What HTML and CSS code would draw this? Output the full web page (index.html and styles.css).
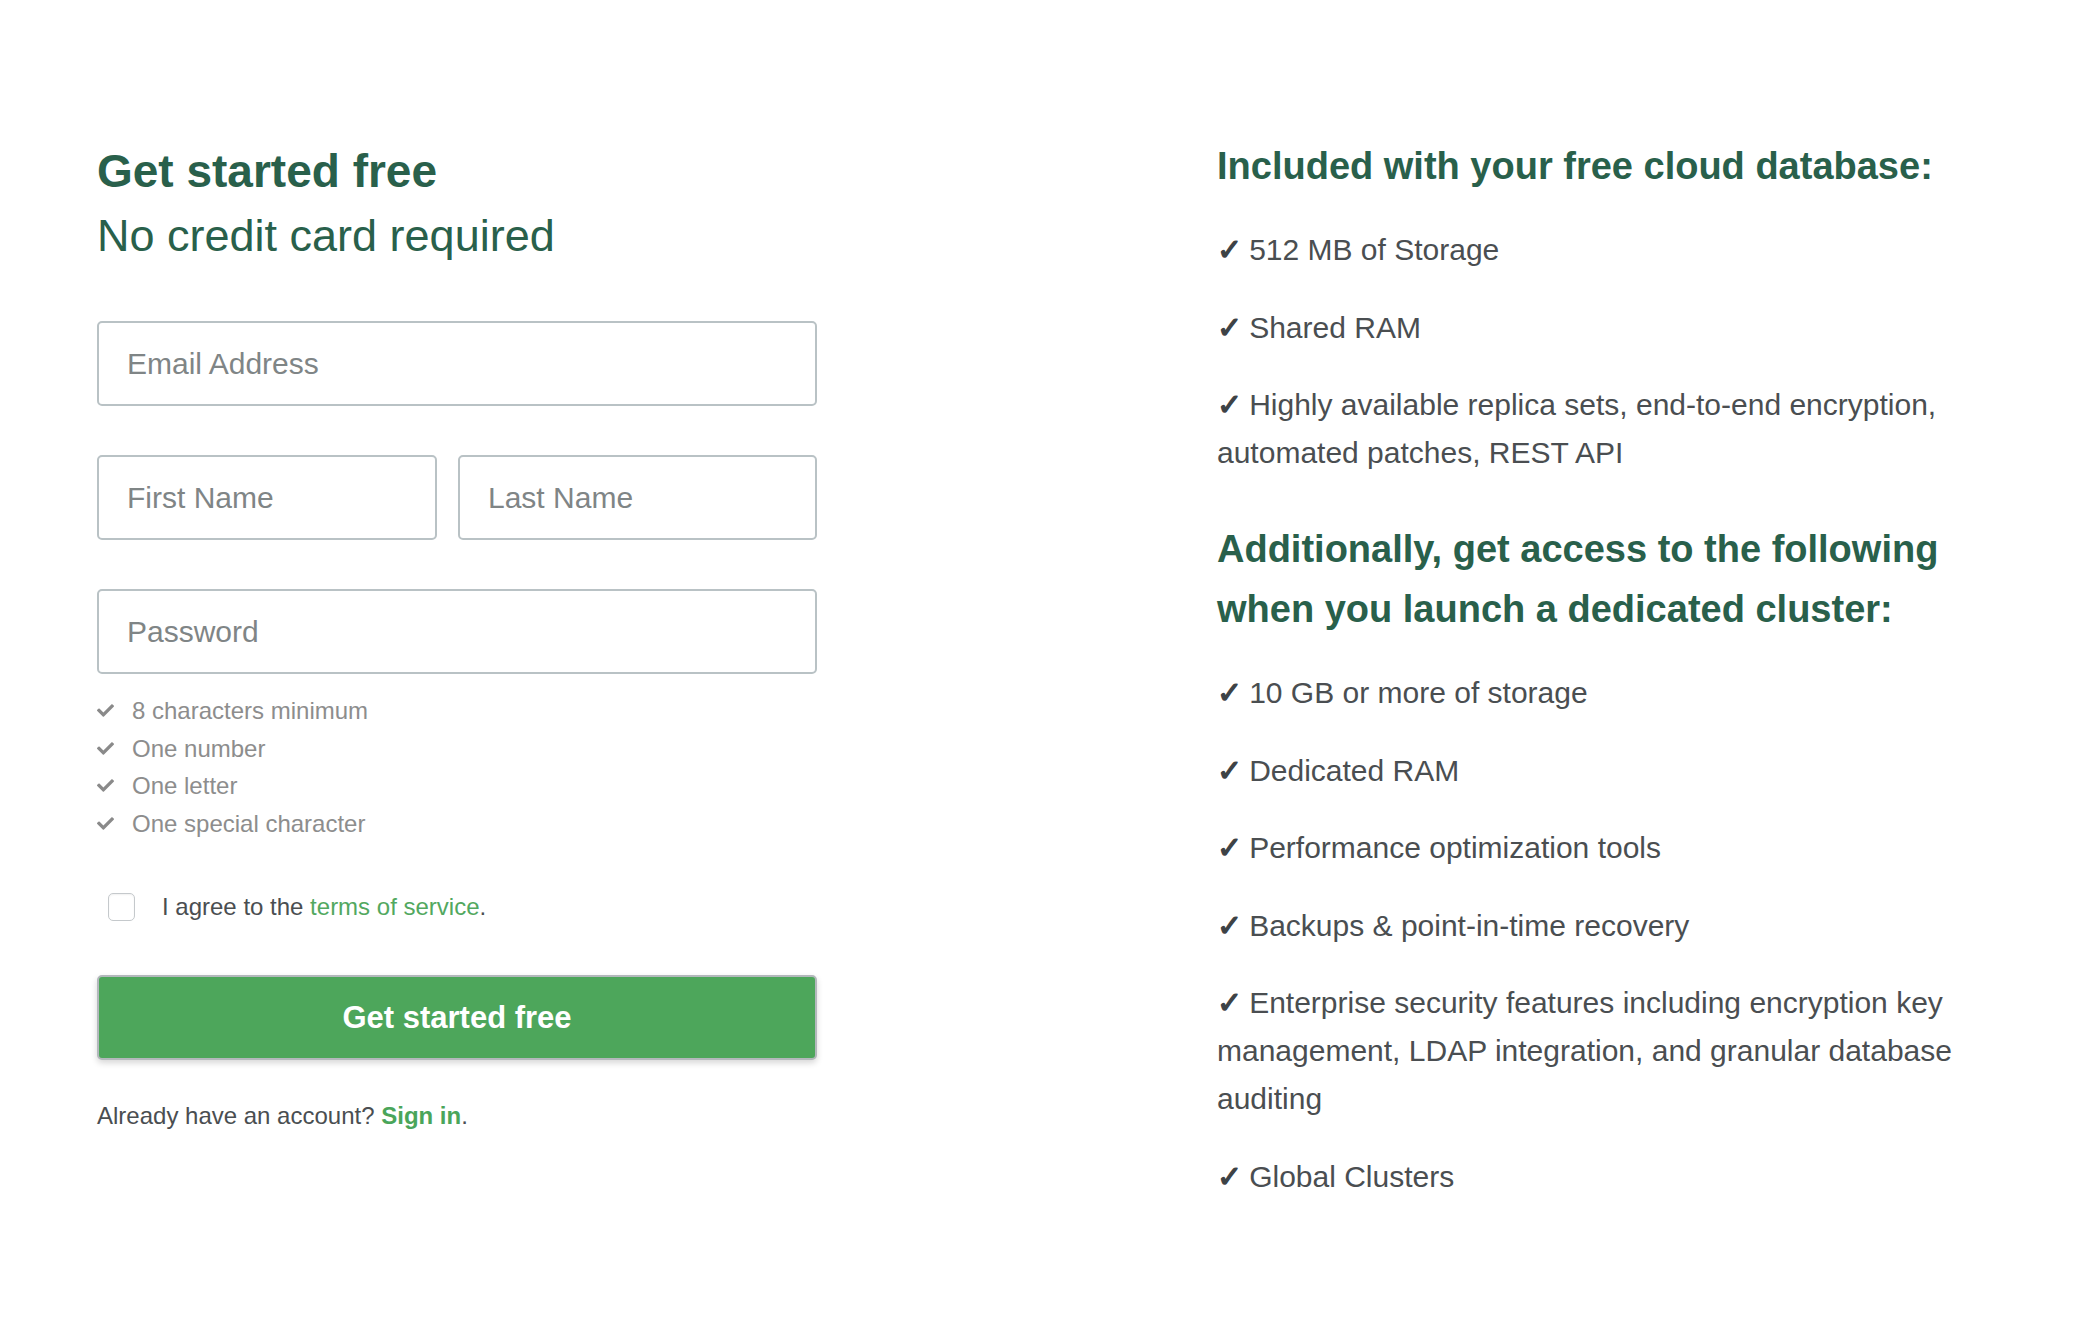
FILE: index.html
```html
<!DOCTYPE html>
<html lang="en">
<head>
<meta charset="utf-8">
<title>Get started free</title>
<link rel="stylesheet" href="styles.css">
</head>
<body>
<main class="page">
  <section class="signup">
    <h1 class="title">Get started free</h1>
    <p class="subtitle">No credit card required</p>
    <form class="form">
      <div class="fields">
        <div class="field"><span class="ph">Email Address</span></div>
        <div class="name-row">
          <div class="field"><span class="ph">First Name</span></div>
          <div class="field"><span class="ph">Last Name</span></div>
        </div>
        <div class="field"><span class="ph">Password</span></div>
      </div>
      <ul class="rules">
        <li><svg class="rule-check" viewBox="0 60 512 392" aria-hidden="true"><path d="M173.9 439.4l-166.4-166.4c-10-10-10-26.2 0-36.2l36.2-36.2c10-10 26.2-10 36.2 0L192 312.7 432.1 72.6c10-10 26.2-10 36.2 0l36.2 36.2c10 10 10 26.2 0 36.2l-294.4 294.4c-10 10-26.2 10-36.2 0z"/></svg><span>8 characters minimum</span></li>
        <li><svg class="rule-check" viewBox="0 60 512 392" aria-hidden="true"><path d="M173.9 439.4l-166.4-166.4c-10-10-10-26.2 0-36.2l36.2-36.2c10-10 26.2-10 36.2 0L192 312.7 432.1 72.6c10-10 26.2-10 36.2 0l36.2 36.2c10 10 10 26.2 0 36.2l-294.4 294.4c-10 10-26.2 10-36.2 0z"/></svg><span>One number</span></li>
        <li><svg class="rule-check" viewBox="0 60 512 392" aria-hidden="true"><path d="M173.9 439.4l-166.4-166.4c-10-10-10-26.2 0-36.2l36.2-36.2c10-10 26.2-10 36.2 0L192 312.7 432.1 72.6c10-10 26.2-10 36.2 0l36.2 36.2c10 10 10 26.2 0 36.2l-294.4 294.4c-10 10-26.2 10-36.2 0z"/></svg><span>One letter</span></li>
        <li><svg class="rule-check" viewBox="0 60 512 392" aria-hidden="true"><path d="M173.9 439.4l-166.4-166.4c-10-10-10-26.2 0-36.2l36.2-36.2c10-10 26.2-10 36.2 0L192 312.7 432.1 72.6c10-10 26.2-10 36.2 0l36.2 36.2c10 10 10 26.2 0 36.2l-294.4 294.4c-10 10-26.2 10-36.2 0z"/></svg><span>One special character</span></li>
      </ul>
      <label class="agree">
        <input class="checkbox" type="checkbox">
        <span>I agree to the <a class="link" href="#">terms of service</a>.</span>
      </label>
      <button class="cta" type="button">Get started free</button>
    </form>
    <p class="signin">Already have an account? <a class="signin-link" href="#">Sign in</a>.</p>
  </section>

  <section class="benefits">
    <h2 class="heading">Included with your free cloud database:</h2>
    <ul class="features">
      <li>512 MB of Storage</li>
      <li>Shared RAM</li>
      <li>Highly available replica sets, end-to-end encryption, automated patches, REST API</li>
    </ul>
    <h2 class="heading heading-second">Additionally, get access to the following when you launch a dedicated cluster:</h2>
    <ul class="features">
      <li>10 GB or more of storage</li>
      <li>Dedicated RAM</li>
      <li>Performance optimization tools</li>
      <li>Backups &amp; point-in-time recovery</li>
      <li>Enterprise security features including encryption key management, LDAP integration, and granular database auditing</li>
      <li>Global Clusters</li>
    </ul>
  </section>
</main>
</body>
</html>
```

FILE: styles.css
```css
html, body {
  margin: 0;
  padding: 0;
  background: #ffffff;
}

body {
  font-family: "Liberation Sans", Arial, Helvetica, sans-serif;
  color: #4a4e51;
}

.page {
  display: flex;
  align-items: flex-start;
  column-gap: 400px;
  padding: 136px 0 0 97px;
}

/* ---------- left column ---------- */
.signup {
  width: 720px;
  padding-top: 7px;
}

.title {
  margin: 0;
  font-size: 46px;
  line-height: 56px;
  font-weight: 700;
  color: #29604b;
}

.subtitle {
  margin: 9px 0 0;
  font-size: 45px;
  line-height: 56px;
  font-weight: 400;
  color: #29604b;
}

.form {
  margin: 57px 0 0;
}

.fields {
  display: flex;
  flex-direction: column;
  gap: 49px;
}

.name-row {
  display: grid;
  grid-template-columns: 340px 1fr;
  column-gap: 21px;
}

.field {
  box-sizing: border-box;
  height: 85px;
  display: flex;
  align-items: center;
  padding: 0 28px;
  border: 2px solid #b9c2c5;
  border-radius: 5px;
  background: #fff;
  font-size: 30px;
  color: #7f8586;
}

.rules {
  list-style: none;
  margin: 18px 0 0;
  padding: 0;
  font-size: 24px;
  line-height: 37.5px;
  color: #8d8d8d;
}

.rules li {
  display: flex;
  align-items: center;
  gap: 18px;
}

.rule-check {
  width: 17px;
  height: 13px;
  fill: #8a8a8a;
  flex: none;
}

.agree {
  display: flex;
  align-items: center;
  gap: 27px;
  margin-top: 51px;
  padding-left: 11px;
  height: 28px;
  font-size: 24px;
  line-height: 28px;
  color: #4a4e51;
}

.checkbox {
  appearance: none;
  -webkit-appearance: none;
  box-sizing: border-box;
  width: 27px;
  height: 28px;
  margin: 0;
  border: 1.5px solid #c5c9cc;
  border-radius: 5px;
  background: #fff;
  box-shadow: inset 0 1px 2px rgba(0, 0, 0, 0.06);
  flex: none;
}

.link {
  color: #52a860;
  text-decoration: none;
}

.cta {
  display: block;
  box-sizing: border-box;
  width: 100%;
  height: 85px;
  margin-top: 54px;
  border: 2px solid #b3b8bc;
  border-radius: 5px;
  background: #4da65b;
  color: #ffffff;
  font-family: "Liberation Sans", Arial, sans-serif;
  font-size: 31px;
  font-weight: 700;
  box-shadow: 0 3px 6px rgba(0, 0, 0, 0.16);
  cursor: pointer;
}

.signin {
  margin: 41px 0 0;
  font-size: 24px;
  line-height: 30px;
  color: #4a4e51;
}

.signin-link {
  color: #4aa55a;
  font-weight: 700;
  text-decoration: none;
}

/* ---------- right column ---------- */
.benefits {
  width: 770px;
  margin-left: 0;
}

.heading {
  margin: 0 0 30px;
  font-size: 38px;
  line-height: 60px;
  font-weight: 700;
  color: #29604b;
}

.heading-second {
  margin-top: 42px;
}

.features {
  list-style: none;
  margin: 0;
  padding: 0;
  display: flex;
  flex-direction: column;
  gap: 29.5px;
  font-size: 30px;
  line-height: 48px;
  color: #4a4e51;
}

.features li::before {
  content: "\2713";
  display: inline-block;
  margin-right: 7px;
  font-family: "DejaVu Sans", sans-serif;
  font-size: 30px;
  font-weight: 700;
  line-height: 0;
  color: #3d4245;
  -webkit-text-stroke: 1.3px #3d4245;
}
```
